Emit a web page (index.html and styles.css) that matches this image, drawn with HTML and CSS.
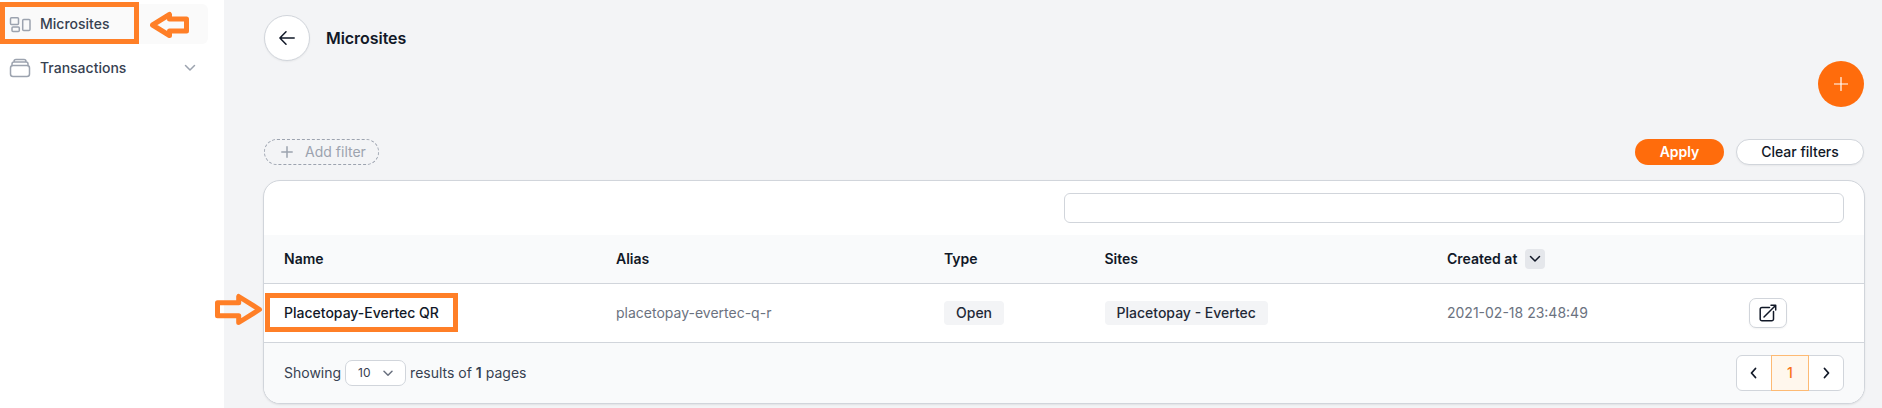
FILE: index.html
```html
<!DOCTYPE html>
<html lang="en">
<head>
<meta charset="utf-8">
<title>Microsites</title>
<link rel="stylesheet" href="styles.css">
</head>
<body>
<div class="app">
  <nav class="sidebar">
    <a class="nav-item active">
      <svg class="nav-icon" width="24" height="24" viewBox="0 0 24 24"><rect x="2.500" y="5.700" width="8" height="6.800" rx="1"/><rect x="14.700" y="7.500" width="7.300" height="11" rx="1"/><rect x="4" y="15" width="7.300" height="4.500" rx="1"/></svg>
      <span>Microsites</span>
    </a>
    <a class="nav-item">
      <svg class="nav-icon" width="24" height="24" viewBox="0 0 24 24"><path d="M6 6V5.500a2 2 0 0 1 2-2h8a2 2 0 0 1 2 2V6M4 9.500V8a2 2 0 0 1 2-2h12a2 2 0 0 1 2 2v1.500"/><rect x="2.500" y="9.500" width="19" height="11" rx="2.500"/></svg>
      <span>Transactions</span>
      <svg class="nav-chevron" width="12" height="8" viewBox="0 0 12 8"><path d="M1.500 1.500 6 6l4.500-4.500"/></svg>
    </a>
  </nav>
  <main class="main">
    <header class="page-header">
      <button class="back"><svg width="16" height="14" viewBox="0 0 16 14"><path d="M7 .8 .9 7 7 13.200M.9 7H15.200"/></svg></button>
      <h1>Microsites</h1>
    </header>
    <div class="create-row"><button class="create"><svg width="14" height="14" viewBox="0 0 14 14"><path d="M7 .5v13M.5 7h13"/></svg></button></div>
    <div class="filters">
      <button class="pill add"><svg width="12" height="12" viewBox="0 0 12 12"><path d="M6 .8v10.400M.8 6h10.400"/></svg>Add filter</button>
      <button class="pill apply">Apply</button>
      <button class="pill clear">Clear filters</button>
    </div>
    <section class="card">
      <div class="search-row"><input class="search" type="text"></div>
      <div class="row head">
        <span>Name</span><span>Alias</span><span>Type</span><span>Sites</span>
        <span class="sort">Created at <i class="sort-btn"><svg width="12" height="8" viewBox="0 0 12 8"><path d="M1.500 1.500 6 6l4.500-4.500"/></svg></i></span>
        <span></span>
      </div>
      <div class="row body">
        <span class="name">Placetopay-Evertec QR</span>
        <span>placetopay-evertec-q-r</span>
        <span><b class="badge">Open</b></span>
        <span><b class="badge">Placetopay - Evertec</b></span>
        <span>2021-02-18 23:48:49</span>
        <span><button class="open"><svg width="18" height="18" viewBox="0 0 18 18"><path d="M10.500 3.500H3a1.800 1.800 0 0 0-1.800 1.800V15A1.800 1.800 0 0 0 3 16.800h9.700a1.800 1.800 0 0 0 1.800-1.800V7.500M5 13 16.500 1.500M12 1.300h4.700V6"/></svg></button></span>
      </div>
      <footer class="foot">
        <span>Showing</span>
        <span class="select">10<svg width="10" height="7" viewBox="0 0 10 7"><path d="M1 1.200 5 5.200l4-4"/></svg></span>
        <span>results of <b>1</b> pages</span>
        <div class="pager">
          <button><svg width="8" height="12" viewBox="0 0 8 12"><path d="M5.500 1.500 1.500 6l4 4.500"/></svg></button>
          <button class="current">1</button>
          <button><svg width="8" height="12" viewBox="0 0 8 12"><path d="M2.500 1.500 6.500 6l-4 4.500"/></svg></button>
        </div>
      </footer>
    </section>
  </main>
</div>
<div class="mark mark-nav"></div>
<div class="mark mark-name"></div>
<svg class="arrow arrow-nav" width="40" height="28" viewBox="0 0 40 28"><path d="M2.500 14 19.500 3.500V8H36.500v12H19.500v4.500Z"/></svg>
<svg class="arrow arrow-name" width="48" height="33" viewBox="0 0 48 33"><path d="M44.500 16.500 23.700 3.500v6.200H2.500v13.100H23.700v6.700Z"/></svg>
</body>
</html>
```
FILE: styles.css
```css
* { box-sizing: border-box; }
body { margin: 0; font: 14px/20px Inter, sans-serif; color: #111827; background: #f3f4f6; }
button { font: inherit; color: inherit; margin: 0; padding: 0; border: 0; display: flex; align-items: center; justify-content: center; }
svg { display: block; flex: none; fill: none; stroke: currentColor; stroke-width: 1.5; stroke-linecap: round; stroke-linejoin: round; }
.app { display: flex; height: 408px; overflow: hidden; }
.sidebar { width: 224px; background: #fff; padding: 4px 16px 0 0; display: flex; flex-direction: column; gap: 4px; }
.nav-item { height: 40px; display: flex; align-items: center; padding: 0 12px 0 8px; gap: 8px; color: #374151; font-weight: 500; border-radius: 0 6px 6px 0; }
.active { background: #fafafa; }
.nav-icon { color: #9ca3af; }
.nav-chevron { margin-left: auto; color: #9ca3af; }
.main { flex: 1; padding: 15px 17px 0 39px; }
.page-header { display: flex; align-items: center; gap: 16px; height: 46px; padding-left: 1px; }
.back { width: 46px; height: 46px; border-radius: 50%; background: #fff; border: 1px solid #d1d5db; box-shadow: 0 1px 2px rgba(0,0,0,.05); }
h1 { margin: 0; font-size: 16px; line-height: 24px; font-weight: 600; letter-spacing: -.05px; }
.create-row { display: flex; justify-content: flex-end; padding-right: 1px; }
.create { width: 46px; height: 46px; border-radius: 50%; background: #ff6c0c; color: #fff; }
.create svg { stroke-width: 1.2; }
.filters { display: flex; align-items: center; gap: 12px; margin: 32px 1px 15px; }
.pill { height: 26px; border-radius: 13px; font-weight: 500; }
.add { width: 115px; padding-left: 4px; background: transparent; border: 1px dashed #9ca3af; color: #9ca3af; gap: 12px; margin-right: auto; font-weight: 400; }
.apply { width: 89px; background: #ff6c0c; color: #fff; font-weight: 600; }
.clear { width: 128px; background: #fff; border: 1px solid #d1d5db; box-shadow: 0 1px 2px rgba(0,0,0,.05); }
.card { height: 224px; border: 1px solid #d1d5db; border-radius: 17px; background: #fff; overflow: hidden; box-shadow: 0 1px 2px rgba(0,0,0,.08); }
.search-row { height: 54px; padding: 12px 20px; display: flex; justify-content: flex-end; }
.search { width: 780px; height: 30px; border: 1px solid #d1d5db; border-radius: 6px; background: #fff; }
.row { display: grid; grid-template-columns: 332px 328px 160.5px 342.5px 302px 1fr; align-items: center; padding-left: 20px; border-bottom: 1px solid #d1d5db; }
.head { height: 49px; background: #f9fafb; font-weight: 600; }
.sort { display: flex; align-items: center; gap: 8px; }
.sort-btn { width: 20px; height: 20px; border-radius: 4px; background: #e5e7eb; display: flex; align-items: center; justify-content: center; }
.body { height: 59px; color: #6b7280; }
.name { color: #111827; font-weight: 500; }
.badge { display: inline-block; height: 24px; line-height: 24px; padding: 0 12px; border-radius: 4px; background: #f3f4f6; color: #1f2937; font-weight: 500; vertical-align: middle; }
.open { width: 38px; height: 30px; border: 1px solid #d1d5db; border-radius: 7px; background: #fff; color: #111827; box-shadow: 0 1px 2px rgba(0,0,0,.05); }
.foot { height: 60px; background: #f9fafb; display: flex; align-items: center; gap: 4px; padding: 0 20px; color: #374151; }
.foot b { font-weight: 600; }
.select { width: 61px; height: 26px; border: 1px solid #d1d5db; border-radius: 7px; background: #fff; font-size: 12px; display: flex; align-items: center; justify-content: space-between; padding: 0 12px; }
.select svg { color: #6b7280; }
.pager { margin-left: auto; display: flex; width: 108px; height: 36px; border: 1px solid #d1d5db; border-radius: 6px; background: #fff; color: #111827; }
.pager svg { stroke-width: 1.8; }
.pager button { flex: 1; background: transparent; }
.pager .current { flex: 0 0 38px; height: 36px; margin-top: -1px; border: 1px solid #fdba74; background: #fff7ed; color: #f97316; font-weight: 500; }
.mark { position: absolute; border: 5px solid #ff7f27; }
.mark-nav { left: 0; top: 2px; width: 139px; height: 42px; }
.mark-name { left: 265px; top: 293px; width: 193px; height: 39px; }
.arrow { position: absolute; color: #ff7f27; stroke-width: 5; }
.arrow-nav { left: 150px; top: 11px; }
.arrow-name { left: 215px; top: 293px; }
```
